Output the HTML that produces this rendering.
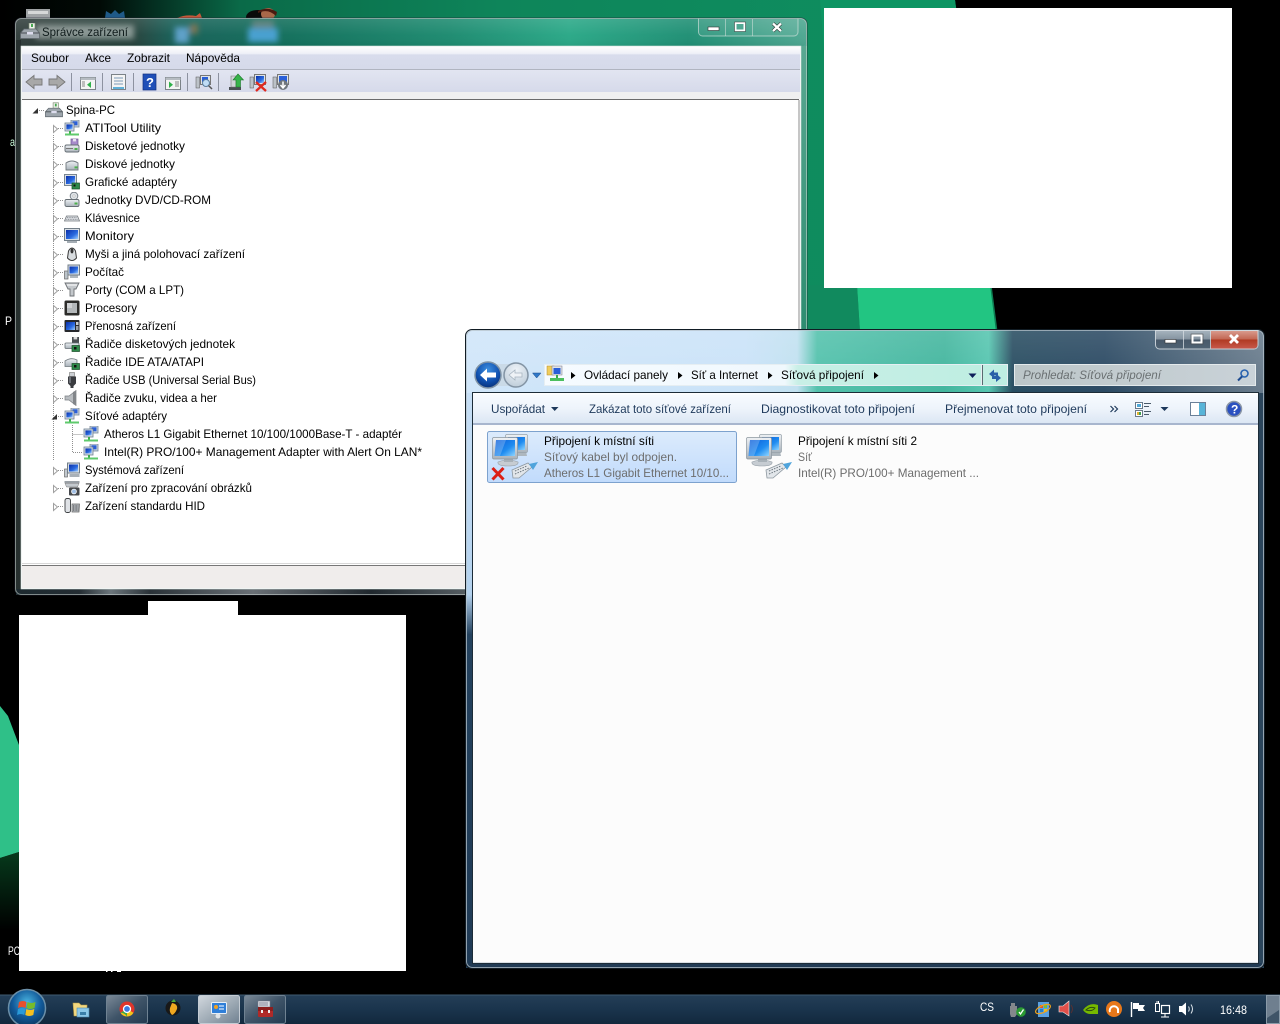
<!DOCTYPE html>
<html><head><meta charset="utf-8"><title>Správce zařízení</title>
<style>html,body{margin:0;padding:0;background:#000;overflow:hidden}svg{display:block}text{font-family:"Liberation Sans","DejaVu Sans",sans-serif;font-size:12px}</style></head>
<body>
<svg xmlns="http://www.w3.org/2000/svg" width="1280" height="1024" viewBox="0 0 1280 1024">
<defs>
<linearGradient id="bgT" gradientUnits="userSpaceOnUse" x1="0" x2="1000" y1="0" y2="0"><stop offset="0" stop-color="#000"/><stop offset=".1" stop-color="#010a06"/><stop offset=".14" stop-color="#03251a"/><stop offset=".24" stop-color="#0a6a48"/><stop offset=".5" stop-color="#0e855a"/><stop offset=".95" stop-color="#0f8f60"/><stop offset="1" stop-color="#0d7a50"/></linearGradient>
<linearGradient id="blob" x1="0" x2="0" y1="0" y2="1"><stop offset="0" stop-color="#063a1c"/><stop offset="1" stop-color="#000"/></linearGradient>
<linearGradient id="g1" x1="0" x2="1" y1="0" y2="0"><stop offset="0" stop-color="#333f3d"/><stop offset=".15" stop-color="#26423c"/><stop offset=".2" stop-color="#176058"/><stop offset=".35" stop-color="#12705c"/><stop offset=".55" stop-color="#1d8b70"/><stop offset=".7" stop-color="#2aa887"/><stop offset=".85" stop-color="#1f8f74"/><stop offset="1" stop-color="#4fa892"/></linearGradient>
<linearGradient id="g1s" x1="0" x2="0" y1="0" y2="1"><stop offset="0" stop-color="#fff" stop-opacity=".12"/><stop offset=".6" stop-color="#fff" stop-opacity=".02"/><stop offset="1" stop-color="#000" stop-opacity=".05"/></linearGradient>
<linearGradient id="g1r" x1="0" x2="0" y1="0" y2="1"><stop offset="0" stop-color="#5aa892"/><stop offset=".5" stop-color="#2f8e72"/><stop offset="1" stop-color="#1a6e55"/></linearGradient>
<linearGradient id="g1b" x1="0" x2="1" y1="0" y2="0"><stop offset="0" stop-color="#1d2a30"/><stop offset=".08" stop-color="#242d33"/><stop offset=".12" stop-color="#6c767c"/><stop offset=".17" stop-color="#2a3238"/><stop offset=".3" stop-color="#6a7076"/><stop offset=".45" stop-color="#20282e"/><stop offset=".62" stop-color="#6c7479"/><stop offset=".7" stop-color="#1b2226"/><stop offset="1" stop-color="#1b2226"/></linearGradient>
<linearGradient id="menu" x1="0" x2="0" y1="0" y2="1"><stop offset="0" stop-color="#fdfdfe"/><stop offset=".3" stop-color="#eef0f7"/><stop offset=".36" stop-color="#d8dcec"/><stop offset="1" stop-color="#d6daea"/></linearGradient>
<linearGradient id="tb" x1="0" x2="0" y1="0" y2="1"><stop offset="0" stop-color="#e2e5f1"/><stop offset="1" stop-color="#d6daea"/></linearGradient>
<linearGradient id="g2" x1="0" x2="1" y1="0" y2="0"><stop offset="0" stop-color="#cfe5f9"/><stop offset=".35" stop-color="#c9e2f8"/><stop offset=".415" stop-color="#c0e0f0"/><stop offset=".44" stop-color="#4fc0aa"/><stop offset=".6" stop-color="#3fb49c"/><stop offset=".655" stop-color="#52c4ae"/><stop offset=".685" stop-color="#24495e"/><stop offset=".8" stop-color="#274660"/><stop offset="1" stop-color="#66798a"/></linearGradient>
<linearGradient id="g2s" x1="0" x2="0" y1="0" y2="1"><stop offset="0" stop-color="#fff" stop-opacity=".14"/><stop offset="1" stop-color="#fff" stop-opacity=".02"/></linearGradient>
<linearGradient id="g2l" x1="0" x2="0" y1="0" y2="1"><stop offset="0" stop-color="#c6def5"/><stop offset=".35" stop-color="#b4d2ee"/><stop offset=".42" stop-color="#24425e"/><stop offset="1" stop-color="#1f3a55"/></linearGradient>
<linearGradient id="tb2" x1="0" x2="0" y1="0" y2="1"><stop offset="0" stop-color="#f8fbff"/><stop offset=".5" stop-color="#eef4fb"/><stop offset="1" stop-color="#dbe6f4"/></linearGradient>
<linearGradient id="sel" x1="0" x2="0" y1="0" y2="1"><stop offset="0" stop-color="#dcebfc"/><stop offset="1" stop-color="#c1dbfc"/></linearGradient>
<linearGradient id="addr" x1="0" x2="1" y1="0" y2="0"><stop offset="0" stop-color="#f6fbff"/><stop offset=".55" stop-color="#f0f8fd"/><stop offset=".58" stop-color="#c8efe6"/><stop offset="1" stop-color="#bfeee2"/></linearGradient>
<linearGradient id="srch" x1="0" x2="1" y1="0" y2="0"><stop offset="0" stop-color="#bcc6c8"/><stop offset="1" stop-color="#c9d2d8"/></linearGradient>
<linearGradient id="btn" x1="0" x2="0" y1="0" y2="1"><stop offset="0" stop-color="#a7b4be"/><stop offset=".48" stop-color="#8493a0"/><stop offset=".5" stop-color="#48596a"/><stop offset="1" stop-color="#4f6273"/></linearGradient>
<linearGradient id="close" x1="0" x2="0" y1="0" y2="1"><stop offset="0" stop-color="#d89a8c"/><stop offset=".48" stop-color="#c26552"/><stop offset=".5" stop-color="#b03a22"/><stop offset="1" stop-color="#c8584a"/></linearGradient>
<linearGradient id="task" x1="0" x2="0" y1="0" y2="1"><stop offset="0" stop-color="#243e57"/><stop offset=".5" stop-color="#1a344c"/><stop offset="1" stop-color="#12283d"/></linearGradient>
<linearGradient id="tbtn" x1="0" x2="1" y1="0" y2="1"><stop offset="0" stop-color="#7c8a98"/><stop offset=".5" stop-color="#3f5468"/><stop offset="1" stop-color="#223a50"/></linearGradient>
<linearGradient id="tbtnA" x1="0" x2="1" y1="0" y2="1"><stop offset="0" stop-color="#d2d8de"/><stop offset=".6" stop-color="#98a5b0"/><stop offset="1" stop-color="#6f8090"/></linearGradient>
<linearGradient id="scr" x1="0" x2="1" y1="0" y2="1"><stop offset="0" stop-color="#0a2fa8"/><stop offset=".6" stop-color="#2a6ae0"/><stop offset="1" stop-color="#9fd0ff"/></linearGradient>
<linearGradient id="bscr" x1="0" x2="1" y1="0" y2="1"><stop offset="0" stop-color="#0a5ad8"/><stop offset=".6" stop-color="#1f8cf0"/><stop offset="1" stop-color="#8fd4ff"/></linearGradient>
<linearGradient id="sil" x1="0" x2="0" y1="0" y2="1"><stop offset="0" stop-color="#eef1f4"/><stop offset="1" stop-color="#a9b2ba"/></linearGradient>
<radialGradient id="orb" cx=".5" cy=".35" r=".7"><stop offset="0" stop-color="#4ab4e0"/><stop offset=".55" stop-color="#125a9a"/><stop offset="1" stop-color="#0a3358"/></radialGradient>
<radialGradient id="backb" cx=".5" cy=".3" r=".75"><stop offset="0" stop-color="#3d8fe0"/><stop offset=".6" stop-color="#0f4fae"/><stop offset="1" stop-color="#062c70"/></radialGradient>
<radialGradient id="fwdb" cx=".5" cy=".3" r=".75"><stop offset="0" stop-color="#eef3f8"/><stop offset="1" stop-color="#bccbd8"/></radialGradient>
<filter id="bl"><feGaussianBlur stdDeviation="3"/></filter>

<symbol id="net" viewBox="0 0 16 16"><rect x="7" y="0" width="8" height="7" fill="#c8d2dc" stroke="#76879a" stroke-width=".8"/><rect x="8.500" y="1.300" width="5" height="4" fill="#2a5fd8"/><rect x="1" y="3" width="9" height="8" fill="#d8dee4" stroke="#6e7f92" stroke-width=".8"/><rect x="2.400" y="4.400" width="6.200" height="5" fill="url(#scr)"/><rect x="5" y="11" width="2" height="2.500" fill="#3bb04a"/><rect x="1" y="13.500" width="14" height="2" fill="#5fca6c"/></symbol>
<symbol id="drv" viewBox="0 0 16 16"><rect x="7" y="1" width="7" height="6" fill="#a78acb" stroke="#6c5a90" stroke-width=".7"/><rect x="9" y="1" width="3" height="2.400" fill="#e6dff0"/><rect x="1" y="7" width="14" height="7" rx="1.500" fill="url(#sil)" stroke="#666e74" stroke-width=".9"/><rect x="10.500" y="10" width="3" height="2" fill="#4cb04c"/><rect x="2" y="10" width="7" height="1" fill="#777"/></symbol>
<symbol id="hdd" viewBox="0 0 16 16"><path d="M2 7Q8 3 14 7V14H2Z" fill="url(#sil)" stroke="#70787e" stroke-width=".9"/><rect x="10.500" y="10.400" width="3" height="2" fill="#4cb04c"/></symbol>
<symbol id="gfx" viewBox="0 0 16 16"><rect x="0.500" y="0.500" width="12" height="11" fill="#d8dee4" stroke="#7a8690"/><rect x="2" y="2" width="9" height="8" fill="url(#scr)"/><rect x="8" y="9" width="7.500" height="6" fill="#2f8a4a" stroke="#174a26" stroke-width=".7"/><rect x="9.500" y="10.500" width="2" height="2" fill="#111"/></symbol>
<symbol id="dvd" viewBox="0 0 16 16"><circle cx="10" cy="4" r="3.800" fill="#dfe4e8" stroke="#7c848c"/><circle cx="10" cy="4" r="1.200" fill="#fff" stroke="#999" stroke-width=".5"/><rect x="1" y="7.500" width="14" height="7" rx="1.500" fill="url(#sil)" stroke="#666e74" stroke-width=".9"/><rect x="10.500" y="10.500" width="3" height="2" fill="#4cb04c"/></symbol>
<symbol id="kbd" viewBox="0 0 16 16"><path d="M2.500 6H13.500L15.500 11H.5Z" fill="#dfe2e6" stroke="#74797e" stroke-width=".8"/><path d="M3 7.600H13M2.300 9.400H13.700" stroke="#8b9096" stroke-dasharray="1 .7" fill="none"/></symbol>
<symbol id="mon" viewBox="0 0 16 16"><rect x="0.500" y="0.500" width="15" height="12" fill="#d8dee4" stroke="#727e88"/><rect x="2" y="2" width="12" height="9" fill="url(#scr)"/><rect x="3" y="13" width="10" height="2" fill="#a5adb4"/></symbol>
<symbol id="mouse" viewBox="0 0 16 16"><path d="M4.500 5Q8 -1 11.500 5L12.500 12Q8 17 3.500 12Z" fill="#d8dcdf" stroke="#3a3a3a" stroke-width="1"/><ellipse cx="8" cy="5" rx="1.500" ry="2.500" fill="#333"/></symbol>
<symbol id="pc" viewBox="0 0 16 16"><rect x="0.500" y="7" width="3.500" height="8" fill="#bcc4ca" stroke="#666"  stroke-width=".7"/><rect x="4" y="1" width="11.500" height="10" fill="#d8dee4" stroke="#727e88"/><rect x="5.500" y="2.500" width="8.500" height="7" fill="url(#scr)"/><rect x="6" y="11.500" width="8" height="2.500" fill="#b0b8be"/></symbol>
<symbol id="port" viewBox="0 0 16 16"><path d="M1 1H15L12 7H10V14H6V7H4Z" fill="#c4c8cc" stroke="#6e7276" stroke-width=".9"/><path d="M3 3H13" stroke="#fff"/></symbol>
<symbol id="cpu" viewBox="0 0 16 16"><rect x="0.500" y="0.500" width="15" height="15" rx="1.500" fill="#2c2c2a"/><rect x="3" y="3" width="10" height="10" fill="#b4b8ba"/><rect x="3" y="3" width="5" height="5" fill="#d0d2d4"/></symbol>
<symbol id="pda" viewBox="0 0 16 16"><rect x="0.500" y="2" width="15" height="12" rx="1" fill="#26282c"/><rect x="2" y="4" width="9" height="8" fill="url(#scr)"/><rect x="12" y="4" width="2.500" height="3" fill="#c9ced2"/><rect x="12" y="8" width="2.500" height="4" fill="#9aa0a6"/></symbol>
<symbol id="fdc" viewBox="0 0 16 16"><rect x="8" y="1" width="7" height="6" fill="#4a4e52"/><rect x="9.600" y="1" width="3.600" height="2.400" fill="#ddd"/><rect x="1" y="7" width="14" height="5.500" rx="1" fill="url(#sil)" stroke="#666e74" stroke-width=".8"/><rect x="8" y="9.500" width="7.500" height="6" fill="#2f8a4a" stroke="#174a26" stroke-width=".7"/><rect x="10" y="11" width="2.500" height="2.500" fill="#111"/></symbol>
<symbol id="ide" viewBox="0 0 16 16"><path d="M1 7Q7 3 13 6V12.500H1Z" fill="url(#sil)" stroke="#70787e" stroke-width=".8"/><rect x="8" y="9.500" width="7.500" height="6" fill="#2f8a4a" stroke="#174a26" stroke-width=".7"/><rect x="10" y="11" width="2.500" height="2.500" fill="#111"/></symbol>
<symbol id="usb" viewBox="0 0 16 16"><rect x="5.500" y="0.500" width="5" height="4" fill="#ccd0d4" stroke="#777" stroke-width=".6"/><path d="M4 4.500H12V11.500L9.500 14V16H6.500V14L4 11.500Z" fill="#3a3c40"/><rect x="5" y="5" width="2" height="6" fill="#6c7076"/></symbol>
<symbol id="snd" viewBox="0 0 16 16"><path d="M1 6H5L12 .5V15.500L5 10H1Z" fill="#b8bcc0" stroke="#7a7e82" stroke-width=".7"/><path d="M9 2V14L12 15.500V.5Z" fill="#82868a"/></symbol>
<symbol id="sys" viewBox="0 0 16 16"><rect x="0.500" y="7" width="3" height="8" fill="#c2c8ce" stroke="#555" stroke-width=".6"/><rect x="3.500" y="1" width="12" height="10" fill="#d8dee4" stroke="#727e88"/><rect x="5" y="2.500" width="9" height="7" fill="url(#scr)"/><rect x="5.500" y="12" width="10" height="3" fill="#a9b1b8"/></symbol>
<symbol id="img" viewBox="0 0 16 16"><rect x="0.500" y="1" width="15" height="2.200" fill="#9aa0a6"/><path d="M1 3.200H15L13.500 7H2.500Z" fill="#c4c9ce" stroke="#777" stroke-width=".5"/><rect x="5" y="7.500" width="10.500" height="8" rx="1" fill="#45484c"/><circle cx="10" cy="11.500" r="2.400" fill="#a2c0e6" stroke="#fff" stroke-width=".8"/></symbol>
<symbol id="hid" viewBox="0 0 16 16"><rect x="1" y="0.500" width="5.500" height="14" rx="2" fill="#dfe2e6" stroke="#3c3f42" stroke-width=".9"/><path d="M8 6H15.500L15 14H8Z" fill="#b8bdc2" stroke="#666" stroke-width=".7"/><path d="M9 8H14.500M9 10H14.500M9 12H14.500" stroke="#444" stroke-dasharray="1 .6"/></symbol>
<symbol id="root" viewBox="0 0 20 16"><rect x="9" y="0" width="6" height="6" fill="#eef0ea" stroke="#7a8a70" stroke-width=".7"/><rect x="11" y="1" width="2" height="3" fill="#46a850"/><path d="M4 6H16L19.500 10V15.500H.5V10Z" fill="#9da5ac" stroke="#60686e" stroke-width=".8"/><path d="M.5 10H19.500" stroke="#4a5056"/><rect x="7" y="9" width="6" height="2.500" fill="#dde"/></symbol>
<symbol id="bigmon" viewBox="0 0 50 48">
<path d="M23 18H35L36 23H22Z" fill="#aeb7be"/>
<rect x="14.500" y="1.500" width="22" height="18" rx="1.500" fill="url(#sil)" stroke="#97a2aa" stroke-width=".7"/><rect x="17" y="4" width="17" height="13" fill="url(#bscr)"/>
<path d="M7 29Q17 25 27 29Q28 33 17 33Q6 33 7 29Z" fill="#c6ccd2" stroke="#949ea6" stroke-width=".6"/><rect x="13" y="25" width="9" height="4" fill="#a8b1b8"/>
<rect x="1.500" y="4.500" width="25" height="21.500" rx="1.500" fill="url(#sil)" stroke="#8b959d" stroke-width=".7"/><path d="M5 7H24V23H3.500Z" fill="url(#bscr)"/><path d="M5 7H15L9 23H3.500Z" fill="#fff" opacity=".22"/>
<path d="M21 37L37 30L41 34L28 45H22Z" fill="#e2e6ea" stroke="#8c979f" stroke-width=".8"/><path d="M24 38L36 33M24 41L38 35" stroke="#6d7880" stroke-dasharray="1.500 1.200"/>
<path d="M38 31L47 29L42 37Z" fill="#4fa4dc"/></symbol>
</defs>

<!-- desktop -->
<rect width="1280" height="1024" fill="#000"/>
<polygon points="0,0 955,0 998,335 800,335 800,100 0,20" fill="url(#bgT)"/>
<polygon points="820,0 955,0 962,50 824,50" fill="#0d9563"/>
<polygon points="857,285 990,285 996,332 860,332" fill="#22c582"/>
<polygon points="800,285 857,285 860,332 800,332" fill="#118a5e"/>
<polygon points="0,706 8,716 19,745 19,852 0,858" fill="#2fc088"/>
<polygon points="0,858 19,852 19,930 0,930" fill="url(#blob)"/>
<rect x="26" y="9" width="24" height="10" fill="#9fa3a5"/><rect x="28" y="11" width="20" height="3" fill="#d6d8d8"/>
<path d="M105 18L106 11L111 14L115 10L119 14L124 11L125 18Z" fill="#1f5a88"/>
<path d="M177 18Q186 14 196 16L200 13L202 18Z" fill="#c4583a"/>
<ellipse cx="258" cy="17" rx="12" ry="7" fill="#0a0a0a"/><ellipse cx="268" cy="14" rx="7" ry="6" fill="#a8684a"/><path d="M258 11Q268 6 277 12L276 16Q268 8 258 13Z" fill="#4a1a10"/>
<rect x="824" y="8" width="408" height="280" fill="#fff"/>
<text x="5" y="325" fill="#fff" textLength="7" lengthAdjust="spacingAndGlyphs">P</text>
<text x="10" y="146" fill="#cfd" textLength="5" lengthAdjust="spacingAndGlyphs">a</text>
<text x="8" y="955" fill="#fff" textLength="12" lengthAdjust="spacingAndGlyphs">PC</text>
<rect x="106" y="969" width="1.500" height="3" fill="#fff"/><rect x="111" y="969" width="1.500" height="3" fill="#fff"/><rect x="117" y="969" width="4" height="3" fill="#fff"/>

<!-- Window 1 -->
<rect x="15" y="18" width="792" height="577" rx="6" fill="url(#g1)" stroke="#223" stroke-opacity=".6"/>
<rect x="15.500" y="18.500" width="791" height="28" rx="6" fill="url(#g1s)"/>
<g filter="url(#bl)"><rect x="36" y="25" width="98" height="14" fill="#dfe6e4" opacity=".5"/><rect x="175" y="27" width="14" height="16" fill="#5fa0c8"/><rect x="190" y="24" width="8" height="10" fill="#a07a50" opacity=".7"/><rect x="248" y="28" width="30" height="14" fill="#4aa0d0"/><rect x="252" y="20" width="22" height="8" fill="#7a8a8a" opacity=".7"/></g>
<rect x="801" y="46" width="6" height="546" fill="url(#g1r)"/>
<rect x="15" y="40" width="6" height="552" fill="#27302f"/>
<rect x="16" y="589" width="790" height="6" fill="url(#g1b)"/>
<rect x="15.500" y="18.500" width="791" height="576" rx="6" fill="none" stroke="#cfd8d4" stroke-opacity=".55"/>
<g>
<path d="M698.500 18.500V32a4 4 0 0 0 4 4H794a4 4 0 0 0 4-4V18.500" fill="#fff" fill-opacity=".08" stroke="#dfe8e4" stroke-opacity=".6"/>
<path d="M725.500 19V36M752.500 19V36" stroke="#dfe8e4" stroke-opacity=".5"/>
<rect x="708" y="27" width="11" height="3.500" fill="#fff" stroke="#333" stroke-width=".6"/>
<rect x="735.500" y="23" width="9" height="7.500" fill="none" stroke="#fff" stroke-width="2"/><rect x="734.500" y="22" width="11" height="9.500" fill="none" stroke="#333" stroke-width=".5"/>
<path d="M773 23.500L781 31M781 23.500L773 31" stroke="#222" stroke-width="3.400"/><path d="M773 23.500L781 31M781 23.500L773 31" stroke="#fff" stroke-width="2.400"/>
</g>
<use href="#root" x="20" y="23" width="20" height="16"/>
<text x="42" y="36" fill="#101c1c" textLength="86" lengthAdjust="spacingAndGlyphs">Správce zařízení</text>

<rect x="21" y="46" width="780" height="543" fill="#fff" stroke="#cfdcd8" stroke-width=".6"/>
<rect x="22" y="47" width="778" height="22" fill="url(#menu)"/>
<rect x="22" y="69" width="778" height="1" fill="#b0b4c0"/>
<rect x="22" y="70" width="778" height="22" fill="url(#tb)"/>
<rect x="22" y="92" width="778" height="7" fill="#f0f0f0"/>
<rect x="22" y="99" width="777" height="1" fill="#6b6b6b"/>
<rect x="798" y="100" width="2" height="464" fill="#c6c6c6"/>
<rect x="22" y="563" width="778" height="1" fill="#d8d8d8"/>
<rect x="22" y="565" width="778" height="1" fill="#777"/>
<rect x="22" y="566" width="778" height="22" fill="#f0edec"/>
<g fill="#000">
<text x="31" y="62" textLength="38" lengthAdjust="spacingAndGlyphs">Soubor</text>
<text x="85" y="62" textLength="26" lengthAdjust="spacingAndGlyphs">Akce</text>
<text x="127" y="62" textLength="43" lengthAdjust="spacingAndGlyphs">Zobrazit</text>
<text x="186" y="62" textLength="54" lengthAdjust="spacingAndGlyphs">Nápověda</text>
</g>
<!-- W1 toolbar -->
<path d="M26 82L34 75.500V79H42V85H34V88.500Z" fill="#a8a8a8" stroke="#777" stroke-width=".9"/>
<path d="M65 82L57 75.500V79H49V85H57V88.500Z" fill="#a8a8a8" stroke="#777" stroke-width=".9"/>
<path d="M71.500 73V91M102.500 73V91M133.500 73V91M187.500 73V91M218.500 73V91" stroke="#8d92a0"/>
<g>
<rect x="80.500" y="77.500" width="15" height="12" fill="#f4f4f4" stroke="#7b8288"/><rect x="80.500" y="77.500" width="15" height="2.500" fill="#b6bcc2"/><path d="M91 81.500V88L87 84.700Z" fill="#2fb04a"/><path d="M82 82H85M82 84H85M82 86H85" stroke="#888"/>
<rect x="111.500" y="74.500" width="14" height="15" fill="#f4f4f4" stroke="#7b8288"/><path d="M114 78H123M114 81H123M114 84H123" stroke="#7b9ab8"/><rect x="113" y="87" width="11" height="2" fill="#5fb0d8"/>
<rect x="143" y="74" width="13" height="16" fill="#1f4fb8" stroke="#123080" stroke-width=".7"/><text x="146" y="87" fill="#fff" font-weight="bold" style="font-size:13px">?</text>
<rect x="165.500" y="77.500" width="15" height="12" fill="#f4f4f4" stroke="#7b8288"/><rect x="165.500" y="77.500" width="15" height="2.500" fill="#b6bcc2"/><path d="M169 81.500V88L173 84.700Z" fill="#2fb04a"/><path d="M175 82H179M175 84H179M175 86H179" stroke="#888"/>
<rect x="196" y="77" width="3.500" height="11" fill="#bcc2c8" stroke="#555" stroke-width=".5"/><rect x="200.500" y="75.500" width="10" height="9" fill="#dfe4e8" stroke="#777"/><rect x="202" y="77" width="6" height="5" fill="#2a5fd8"/><circle cx="206" cy="83" r="3.500" fill="#c0ddf6" stroke="#5a7e9e" stroke-width="1"/><path d="M208.500 85.500L212 89" stroke="#555" stroke-width="1.500"/>
<rect x="229" y="87" width="12" height="3" fill="#4a4f54"/><path d="M231 76H236V87H231Z" fill="#d0d4d8" stroke="#777" stroke-width=".6"/><path d="M238 74L243.500 80H240.500V87H236V80H233Z" fill="#37b34a" stroke="#1d7a2c" stroke-width=".6"/>
<rect x="250" y="77" width="3.500" height="11" fill="#bcc2c8" stroke="#555" stroke-width=".5"/><rect x="254.500" y="74.500" width="11" height="10" fill="#dfe4e8" stroke="#777"/><rect x="256" y="76" width="8" height="7" fill="url(#scr)"/><path d="M256 82L266 91M266 82L256 91" stroke="#e02a20" stroke-width="2.300"/>
<rect x="273" y="77" width="3.500" height="11" fill="#bcc2c8" stroke="#555" stroke-width=".5"/><rect x="277.500" y="74.500" width="11" height="10" fill="#dfe4e8" stroke="#777"/><rect x="279" y="76" width="8" height="7" fill="#2a5fd8"/><circle cx="283" cy="85" r="5" fill="#70767c"/><path d="M283 81.500V87M280.500 85L283 88L285.500 85" stroke="#fff" stroke-width="1.500" fill="none"/>
</g>
<!-- tree lines -->
<g stroke="#8f8f8f" stroke-dasharray="1 1" fill="none">
<path d="M39 110.500H44M53.500 135V460M58 128.500H63M58 146.500H63M58 164.500H63M58 182.500H63M58 200.500H63M58 218.500H63M58 236.500H63M58 254.500H63M58 272.500H63M58 290.500H63M58 308.500H63M58 326.500H63M58 344.500H63M58 362.500H63M58 380.500H63M58 398.500H63M58 416.500H63M58 470.500H63M58 488.500H63M58 506.500H63"/>
<path d="M72.500 425V452.500H83M72.500 434.500H83"/>
</g>
<rect x="50" y="462" width="8" height="50" fill="#fff"/>
<g fill="#fff" stroke="#a0a0a0">
<path d="M53.500 125.500L57.500 129L53.500 132.500Z"/>
<path d="M53.500 143.500L57.500 147L53.500 150.500Z"/><path d="M53.500 161.500L57.500 165L53.500 168.500Z"/><path d="M53.500 179.500L57.500 183L53.500 186.500Z"/><path d="M53.500 197.500L57.500 201L53.500 204.500Z"/><path d="M53.500 215.500L57.500 219L53.500 222.500Z"/><path d="M53.500 233.500L57.500 237L53.500 240.500Z"/><path d="M53.500 251.500L57.500 255L53.500 258.500Z"/><path d="M53.500 269.500L57.500 273L53.500 276.500Z"/><path d="M53.500 287.500L57.500 291L53.500 294.500Z"/><path d="M53.500 305.500L57.500 309L53.500 312.500Z"/><path d="M53.500 323.500L57.500 327L53.500 330.500Z"/><path d="M53.500 341.500L57.500 345L53.500 348.500Z"/><path d="M53.500 359.500L57.500 363L53.500 366.500Z"/><path d="M53.500 377.500L57.500 381L53.500 384.500Z"/><path d="M53.500 395.500L57.500 399L53.500 402.500Z"/><path d="M53.500 467.500L57.500 471L53.500 474.500Z"/><path d="M53.500 485.500L57.500 489L53.500 492.500Z"/><path d="M53.500 503.500L57.500 507L53.500 510.500Z"/>
</g>
<path d="M38 108V113.500H32.500Z" fill="#333"/>
<path d="M57 414V419.500H51.500Z" fill="#333"/>
<!-- tree icons -->
<use href="#root" x="45" y="102" width="18" height="16"/>
<use href="#net" x="64" y="120" width="16" height="16"/>
<use href="#drv" x="64" y="138" width="16" height="16"/>
<use href="#hdd" x="64" y="156" width="16" height="16"/>
<use href="#gfx" x="64" y="174" width="16" height="16"/>
<use href="#dvd" x="64" y="192" width="16" height="16"/>
<use href="#kbd" x="64" y="210" width="16" height="16"/>
<use href="#mon" x="64" y="228" width="16" height="16"/>
<use href="#mouse" x="64" y="246" width="16" height="16"/>
<use href="#pc" x="64" y="264" width="16" height="16"/>
<use href="#port" x="64" y="282" width="16" height="16"/>
<use href="#cpu" x="64" y="300" width="16" height="16"/>
<use href="#pda" x="64" y="318" width="16" height="16"/>
<use href="#fdc" x="64" y="336" width="16" height="16"/>
<use href="#ide" x="64" y="354" width="16" height="16"/>
<use href="#usb" x="64" y="372" width="16" height="16"/>
<use href="#snd" x="64" y="390" width="16" height="16"/>
<use href="#net" x="64" y="408" width="16" height="16"/>
<use href="#net" x="83" y="426" width="16" height="16"/>
<use href="#net" x="83" y="444" width="16" height="16"/>
<use href="#sys" x="64" y="462" width="16" height="16"/>
<use href="#img" x="64" y="480" width="16" height="16"/>
<use href="#hid" x="64" y="498" width="16" height="16"/>
<g fill="#000">
<text x="66" y="114" textLength="49" lengthAdjust="spacingAndGlyphs">Spina-PC</text>
<text x="85" y="132" textLength="76" lengthAdjust="spacingAndGlyphs">ATITool Utility</text>
<text x="85" y="150" textLength="100" lengthAdjust="spacingAndGlyphs">Disketové jednotky</text>
<text x="85" y="168" textLength="90" lengthAdjust="spacingAndGlyphs">Diskové jednotky</text>
<text x="85" y="186" textLength="92" lengthAdjust="spacingAndGlyphs">Grafické adaptéry</text>
<text x="85" y="204" textLength="126" lengthAdjust="spacingAndGlyphs">Jednotky DVD/CD-ROM</text>
<text x="85" y="222" textLength="55" lengthAdjust="spacingAndGlyphs">Klávesnice</text>
<text x="85" y="240" textLength="49" lengthAdjust="spacingAndGlyphs">Monitory</text>
<text x="85" y="258" textLength="160" lengthAdjust="spacingAndGlyphs">Myši a jiná polohovací zařízení</text>
<text x="85" y="276" textLength="39" lengthAdjust="spacingAndGlyphs">Počítač</text>
<text x="85" y="294" textLength="99" lengthAdjust="spacingAndGlyphs">Porty (COM a LPT)</text>
<text x="85" y="312" textLength="52" lengthAdjust="spacingAndGlyphs">Procesory</text>
<text x="85" y="330" textLength="91" lengthAdjust="spacingAndGlyphs">Přenosná zařízení</text>
<text x="85" y="348" textLength="150" lengthAdjust="spacingAndGlyphs">Řadiče disketových jednotek</text>
<text x="85" y="366" textLength="119" lengthAdjust="spacingAndGlyphs">Řadiče IDE ATA/ATAPI</text>
<text x="85" y="384" textLength="171" lengthAdjust="spacingAndGlyphs">Řadiče USB (Universal Serial Bus)</text>
<text x="85" y="402" textLength="132" lengthAdjust="spacingAndGlyphs">Řadiče zvuku, videa a her</text>
<text x="85" y="420" textLength="82" lengthAdjust="spacingAndGlyphs">Síťové adaptéry</text>
<text x="104" y="438" textLength="298" lengthAdjust="spacingAndGlyphs">Atheros L1 Gigabit Ethernet 10/100/1000Base-T - adaptér</text>
<text x="104" y="456" textLength="318" lengthAdjust="spacingAndGlyphs">Intel(R) PRO/100+ Management Adapter with Alert On LAN*</text>
<text x="85" y="474" textLength="99" lengthAdjust="spacingAndGlyphs">Systémová zařízení</text>
<text x="85" y="492" textLength="167" lengthAdjust="spacingAndGlyphs">Zařízení pro zpracování obrázků</text>
<text x="85" y="510" textLength="120" lengthAdjust="spacingAndGlyphs">Zařízení standardu HID</text>
</g>

<!-- white blocks -->
<rect x="148" y="601" width="90" height="14" fill="#fff"/>
<rect x="19" y="615" width="387" height="356" fill="#fff"/>

<!-- Window 2 -->
<rect x="466" y="330" width="798" height="638" rx="6" fill="url(#g2)"/>
<rect x="466.500" y="330.500" width="797" height="62" rx="6" fill="url(#g2s)"/>
<rect x="466" y="393" width="6" height="575" fill="url(#g2l)"/>
<rect x="1258" y="393" width="6" height="575" fill="#2c465c"/>
<rect x="468" y="963" width="794" height="5" fill="#213b55"/>
<rect x="466.500" y="330.500" width="797" height="637" rx="6" fill="none" stroke="#b8c4cc" stroke-opacity=".75"/>
<rect x="465.500" y="329.500" width="799" height="639" rx="6.500" fill="none" stroke="#111c24"/>
<!-- Buttons -->
<path d="M1155.500 330.500V345a4 4 0 0 0 4 4H1254a4 4 0 0 0 4-4V330.500Z" fill="url(#btn)" stroke="#d8dfe4" stroke-opacity=".85"/>
<path d="M1211 331H1257.500V345a3.500 3.500 0 0 1-3.500 3.500H1211Z" fill="url(#close)"/>
<path d="M1183.500 331V348.500M1210.500 331V348.500" stroke="#d8dfe4" stroke-opacity=".75"/>
<rect x="1165" y="339.500" width="11" height="3.500" fill="#fff" stroke="#333" stroke-width=".6"/>
<rect x="1192.500" y="335.500" width="9" height="7" fill="none" stroke="#fff" stroke-width="2"/><rect x="1191" y="334" width="12" height="10" fill="none" stroke="#444" stroke-width=".5"/>
<path d="M1230 335L1238 343M1238 335L1230 343" stroke="#fff" stroke-width="2.800"/>
<!-- Nav -->
<rect x="488" y="364" width="28" height="22" fill="#c7d4df" opacity=".7"/>
<circle cx="516" cy="375" r="12" fill="url(#fwdb)" stroke="#8394a4" stroke-width="1.500"/>
<path d="M509 375L515 370V373H522V377H515V380Z" fill="#eef2f6" stroke="#a6b4c0" stroke-width=".8"/>
<circle cx="488" cy="375" r="13" fill="url(#backb)" stroke="#7f93a6" stroke-width="1.500"/>
<path d="M480 375L487 368.500V372.500H496V377.500H487V381.500Z" fill="#fff"/>
<path d="M532.500 373H541L536.700 378Z" fill="#2f78c8" stroke="#1a4a88" stroke-width=".5"/>
<!-- Address -->
<rect x="544.500" y="364.500" width="437" height="21" fill="url(#addr)" stroke="#e6eef2" />
<rect x="982.500" y="364.500" width="25" height="21" fill="#bfeee2" stroke="#e6eef2"/>
<path d="M982.500 365V385" stroke="#5a6a70"/>
<g>
<rect x="547" y="366" width="7" height="9" fill="#f0cd5c" stroke="#b08a2c" stroke-width=".5"/><rect x="552" y="366" width="10" height="9" fill="#e0e4e8" stroke="#778" stroke-width=".5"/><rect x="553.500" y="368" width="7" height="6" fill="#2a5fd8"/><rect x="550" y="378" width="14" height="3" fill="#4cbf5e"/><rect x="556" y="375" width="2" height="3" fill="#3aa84c"/>
</g>
<path d="M571 372V379L575.500 375.500ZM678 372V379L682.500 375.500ZM768 372V379L772.500 375.500ZM874 372V379L878.500 375.500Z" fill="#000"/>
<g fill="#000">
<text x="584" y="379" textLength="84" lengthAdjust="spacingAndGlyphs">Ovládací panely</text>
<text x="691" y="379" textLength="67" lengthAdjust="spacingAndGlyphs">Síť a Internet</text>
<text x="781" y="379" textLength="83" lengthAdjust="spacingAndGlyphs">Síťová připojení</text>
</g>
<path d="M968.500 373.500H976.500L972.500 378Z" fill="#0e1e5a"/>
<path d="M989 374L994 369.500V372.500H998V375.500H994V378ZM1001 378L996 382V379H992V376H996V373.500Z" fill="#2a60a8"/>
<rect x="1014.500" y="364.500" width="241" height="21" fill="url(#srch)" stroke="#e4eaec"/>
<text x="1023" y="379" fill="#6a7072" font-style="italic" textLength="138" lengthAdjust="spacingAndGlyphs">Prohledat: Síťová připojení</text>
<circle cx="1244.500" cy="373.500" r="3.500" fill="none" stroke="#2a64b0" stroke-width="1.600"/><path d="M1242 376.500L1238 380.500" stroke="#1e4c90" stroke-width="2"/>
<!-- Client -->
<rect x="472.500" y="392.500" width="786" height="571" fill="#fcfcfc" stroke="#1c2c38"/>
<rect x="473" y="393.500" width="785" height="30" fill="url(#tb2)"/>
<rect x="473" y="393.500" width="785" height="1" fill="#fff"/>
<rect x="473" y="423" width="785" height="2" fill="#a8b6ce"/>
<rect x="473" y="962" width="785" height="1" fill="#d8dee4"/>
<g fill="#1e395b">
<text x="491" y="413" textLength="54" lengthAdjust="spacingAndGlyphs">Uspořádat</text>
<text x="589" y="413" textLength="142" lengthAdjust="spacingAndGlyphs">Zakázat toto síťové zařízení</text>
<text x="761" y="413" textLength="154" lengthAdjust="spacingAndGlyphs">Diagnostikovat toto připojení</text>
<text x="945" y="413" textLength="142" lengthAdjust="spacingAndGlyphs">Přejmenovat toto připojení</text>
</g>
<path d="M551 407H558.500L554.700 411Z" fill="#1e395b"/>
<path d="M1110.500 406L1113.500 409L1110.500 412M1114.500 406L1117.500 409L1114.500 412" fill="none" stroke="#1e395b" stroke-width="1.200"/>
<rect x="1135.500" y="402.500" width="7" height="6" fill="#fff" stroke="#6a7a8a"/><rect x="1137" y="404" width="4" height="3" fill="#4fa8d8"/>
<rect x="1135.500" y="410.500" width="7" height="6" fill="#fff" stroke="#6a7a8a"/><rect x="1137" y="412" width="2" height="3" fill="#e0b030"/><rect x="1139" y="412" width="2" height="3" fill="#40a050"/>
<path d="M1144 403.500H1151M1144 406.500H1149M1144 411.500H1151M1144 414.500H1149" stroke="#4a5a6a"/>
<path d="M1160.500 407H1168.500L1164.500 411Z" fill="#1e395b"/>
<rect x="1190.500" y="402.500" width="15" height="13" fill="#fff" stroke="#6a8098"/><rect x="1199" y="403" width="6" height="12" fill="#58b4d8"/>
<circle cx="1234" cy="409" r="7.500" fill="#2a50c0" stroke="#8a96a6" stroke-width="1.500"/>
<text x="1231" y="413.500" fill="#fff" font-weight="bold" style="font-size:12px">?</text>
<!-- Items -->
<rect x="487.500" y="431.500" width="249" height="51" rx="2" fill="url(#sel)" stroke="#7da2ce"/>
<use href="#bigmon" x="491" y="433" width="50" height="48"/>
<path d="M492.500 468L503.500 479.500M503.500 468L492.500 479.500" stroke="#dc1f16" stroke-width="3"/>
<use href="#bigmon" x="745" y="433" width="50" height="48"/>
<text x="544" y="445" fill="#000" textLength="110" lengthAdjust="spacingAndGlyphs">Připojení k místní síti</text>
<text x="544" y="461" fill="#6d6d6d" textLength="133" lengthAdjust="spacingAndGlyphs">Síťový kabel byl odpojen.</text>
<text x="544" y="477" fill="#6d6d6d" textLength="185" lengthAdjust="spacingAndGlyphs">Atheros L1 Gigabit Ethernet 10/10...</text>
<text x="798" y="445" fill="#000" textLength="119" lengthAdjust="spacingAndGlyphs">Připojení k místní síti 2</text>
<text x="798" y="461" fill="#6d6d6d" textLength="14" lengthAdjust="spacingAndGlyphs">Síť</text>
<text x="798" y="477" fill="#6d6d6d" textLength="181" lengthAdjust="spacingAndGlyphs">Intel(R) PRO/100+ Management ...</text>

<!-- Taskbar -->
<rect x="0" y="995" width="1280" height="29" fill="url(#task)"/>
<rect x="0" y="994.500" width="1280" height="1" fill="#3f5a70"/>
<rect x="106.500" y="995.500" width="41" height="28" rx="2" fill="url(#tbtn)" stroke="#6f8292"/>
<rect x="198.500" y="995.500" width="41" height="28" rx="2" fill="url(#tbtnA)" stroke="#c4ccd4"/>
<rect x="244.500" y="995.500" width="41" height="28" rx="2" fill="url(#tbtn)" stroke="#6f8292"/>
<circle cx="27" cy="1008" r="18.500" fill="url(#orb)" stroke="#6b8fa8" stroke-width="1.500"/>
<path d="M19 1002Q23 1000 26.500 1002L25.500 1008Q22 1006 18 1008Z" fill="#e8502c"/>
<path d="M27.500 1002Q31 1004 35.500 1002L34.500 1008Q30 1010 26.500 1008Z" fill="#76bb2a"/>
<path d="M18 1009Q21.500 1007 25.300 1009L24.300 1015Q21 1013 17 1015Z" fill="#2a9ad8"/>
<path d="M26.300 1009Q30 1011 34.300 1009L33.300 1015Q29 1017 25.300 1015Z" fill="#f4c020"/>
<path d="M73 1003H79L81 1005H87V1016H74Z" fill="#f2d880" stroke="#b89a40" stroke-width=".6"/><rect x="77" y="1008" width="12" height="9" fill="#8cc8e8" stroke="#4a88b0" stroke-width=".6"/><rect x="80" y="1012" width="6" height="3" fill="#3a7ea8"/>
<circle cx="127" cy="1009" r="7.500" fill="#e0352b"/><path d="M127 1009L133.500 1012.700A7.500 7.500 0 0 1 120.500 1012.700Z" fill="#f3c21a"/><path d="M127 1009L120.500 1012.700A7.500 7.500 0 0 1 127 1016.500Z" fill="#3aa748"/><circle cx="127" cy="1009" r="3.500" fill="#3b7be0" stroke="#fff" stroke-width="1.300"/>
<circle cx="173" cy="1008" r="7.500" fill="#181818"/><path d="M172 1003Q178 1004 177 1009Q175 1014 172 1015Q169 1012 170 1008Z" fill="#f0a820"/><path d="M171 1002L174 999L176 1002Z" fill="#4ea836"/>
<rect x="211.500" y="1002.500" width="15" height="11" rx="1" fill="#2f7fd8" stroke="#e8f0f8"/><circle cx="216" cy="1007" r="2" fill="#f2a020"/><path d="M219 1006H224M219 1009H224" stroke="#fff"/><circle cx="218" cy="1016" r="2.500" fill="#dfe4e8"/>
<rect x="258" y="1001" width="12" height="6" fill="#d8dde2" stroke="#778" stroke-width=".5"/><path d="M259 1003H268M259 1005H268" stroke="#889"/><rect x="258" y="1009" width="15" height="8" rx="1" fill="#b02a28"/><rect x="258" y="1007" width="15" height="4" fill="#8c1e1e"/><rect x="261" y="1010" width="2" height="3" fill="#eee"/><rect x="268" y="1010" width="2" height="3" fill="#eee"/>
<text x="980" y="1011" fill="#fff" textLength="14" lengthAdjust="spacingAndGlyphs">CS</text>
<path d="M1011 1003H1015V1006H1017V1014L1015 1017H1011L1010 1014V1006H1011Z" fill="#84888c"/><circle cx="1021" cy="1012" r="4.800" fill="#2a9a32"/><path d="M1019 1012L1020.500 1014L1023.500 1009.500" fill="none" stroke="#fff" stroke-width="1.300"/>
<rect x="1038" y="1002" width="11" height="15" fill="#5aa0e0"/><rect x="1040" y="1005" width="3" height="3" fill="#e85020"/><rect x="1044" y="1005" width="3" height="3" fill="#78c030"/><rect x="1040" y="1009" width="3" height="3" fill="#2080d0"/><rect x="1044" y="1009" width="3" height="3" fill="#f4c020"/><ellipse cx="1043" cy="1009" rx="8" ry="3.500" fill="none" stroke="#e8a020" stroke-width="1.200" transform="rotate(-25 1043 1009)"/>
<path d="M1059 1006H1063L1069 1001V1016L1063 1012H1059Z" fill="#e2504a" stroke="#eee" stroke-width=".6"/><path d="M1071 1005Q1074 1009 1071 1013" stroke="#5a3030" fill="none"/>
<path d="M1083 1010Q1089 1002 1098 1005V1014H1090Q1086 1014 1083 1010Z" fill="#76b900"/><path d="M1086 1010Q1090 1006 1095 1008Q1092 1012 1086 1010Z" fill="none" stroke="#2c4a10"/>
<circle cx="1114" cy="1009" r="8" fill="#e8781a"/><path d="M1110 1012A4 4 0 1 1 1118 1009V1013" fill="none" stroke="#fff" stroke-width="2"/>
<path d="M1131.500 1002V1017" stroke="#fff" stroke-width="1.400"/><path d="M1133 1003H1139V1005H1145L1143 1008L1145 1011H1138V1009H1133Z" fill="#fff"/>
<rect x="1161.500" y="1005.500" width="8" height="8" fill="none" stroke="#fff" stroke-width="1.200"/><rect x="1155.500" y="1003.500" width="4" height="8" fill="none" stroke="#fff"/><path d="M1157 1001V1004M1158.500 1001V1004M1165 1014V1017M1161 1017H1169" stroke="#fff"/>
<path d="M1179 1006H1182L1186 1002.500V1015.500L1182 1012H1179Z" fill="#fff"/><path d="M1188.500 1006.500Q1190 1009 1188.500 1011.500M1191 1004.500Q1194 1009 1191 1013.500" fill="none" stroke="#dfe6ec"/>
<text x="1220" y="1014" fill="#fff" textLength="27" lengthAdjust="spacingAndGlyphs">16:48</text>
<rect x="1266.500" y="995.500" width="13" height="28" fill="#3f5468" stroke="#8a9aa8"/>
<path d="M1267 996H1279V1010L1267 1018Z" fill="#8f9caa" opacity=".6"/>
</svg>
</body></html>
